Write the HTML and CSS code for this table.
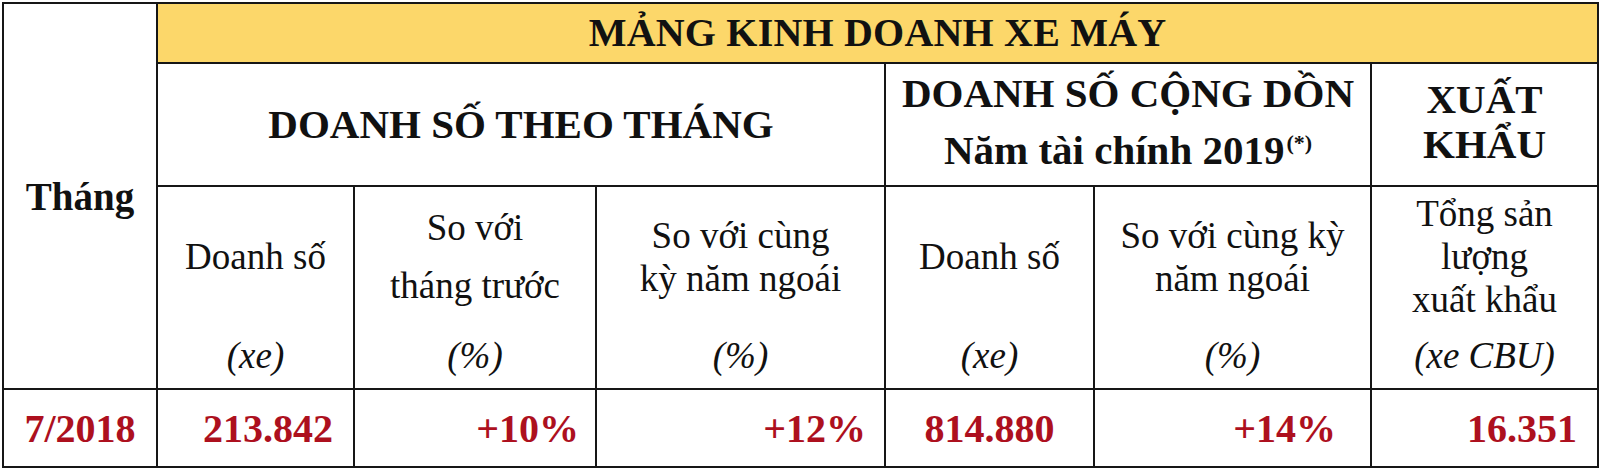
FILE: index.html
```html
<!DOCTYPE html>
<html lang="vi">
<head>
<meta charset="utf-8">
<title>Mảng kinh doanh xe máy</title>
<link rel="stylesheet" href="styles.css">
</head>
<body>
<table class="sheet">
  <colgroup>
    <col class="c-month">
    <col class="c-1">
    <col class="c-2">
    <col class="c-3">
    <col class="c-4">
    <col class="c-5">
    <col class="c-6">
  </colgroup>
  <tr class="r-title">
    <td class="month-head" rowspan="3">Tháng</td>
    <th class="title" colspan="6">MẢNG KINH DOANH XE MÁY</th>
  </tr>
  <tr class="r-group">
    <th class="group" colspan="3">DOANH SỐ THEO THÁNG</th>
    <th class="group tall" colspan="2">DOANH SỐ CỘNG DỒN<br>Năm tài chính 2019<sup class="note">(*)</sup></th>
    <th class="group tight">XUẤT<br>KHẨU</th>
  </tr>
  <tr class="r-sub">
    <td><div class="sub"><div class="main">Doanh số</div><div class="unit">(xe)</div></div></td>
    <td><div class="sub"><div class="main loose">So với<br>tháng trước</div><div class="unit">(%)</div></div></td>
    <td><div class="sub"><div class="main">So với cùng<br>kỳ năm ngoái</div><div class="unit">(%)</div></div></td>
    <td><div class="sub"><div class="main">Doanh số</div><div class="unit">(xe)</div></div></td>
    <td><div class="sub"><div class="main">So với cùng kỳ<br>năm ngoái</div><div class="unit">(%)</div></div></td>
    <td><div class="sub"><div class="main">Tổng sản<br>lượng<br>xuất khẩu</div><div class="unit">(xe CBU)</div></div></td>
  </tr>
  <tr class="r-data">
    <td class="val center">7/2018</td>
    <td class="val pad-20">213.842</td>
    <td class="val pad-16">+10%</td>
    <td class="val pad-18">+12%</td>
    <td class="val center">814.880</td>
    <td class="val pad-34">+14%</td>
    <td class="val pad-20">16.351</td>
  </tr>
</table>
</body>
</html>
```

FILE: styles.css
```css
html, body {
  margin: 0;
  padding: 0;
  background: #ffffff;
}

body {
  padding: 2px 0 0 2px;
  font-family: "Liberation Serif", "Times New Roman", serif;
  color: #111111;
}

.sheet {
  border-collapse: collapse;
  table-layout: fixed;
  width: 1595px;
}

.c-month { width: 154px; }
.c-1 { width: 197px; }
.c-2 { width: 242px; }
.c-3 { width: 289px; }
.c-4 { width: 209px; }
.c-5 { width: 277px; }
.c-6 { width: 227px; }

.sheet td,
.sheet th {
  border: 2px solid #161616;
  padding: 0;
  text-align: center;
  vertical-align: middle;
}

.r-title { height: 60px; }
.r-group { height: 123px; }
.r-sub { height: 203px; }
.r-data { height: 78px; }

.month-head {
  font-weight: bold;
  font-size: 39px;
  background: #ffffff;
  padding-bottom: 14px;
}

.title {
  background: #fcd76a;
  font-weight: bold;
  font-size: 40px;
  line-height: 40px;
  letter-spacing: 0.2px;
}

.group {
  font-weight: bold;
  font-size: 41px;
  line-height: 53px;
  background: #ffffff;
}

.group.tall {
  line-height: 57px;
  padding-bottom: 6px;
}

.group.tight {
  line-height: 45px;
  padding-bottom: 6px;
}

.note {
  font-size: 22px;
  vertical-align: 14px;
  line-height: 0;
  margin-left: 2px;
}

.sub {
  display: flex;
  flex-direction: column;
  height: 201px;
}

.main {
  flex: 1;
  display: flex;
  flex-direction: column;
  justify-content: center;
  font-size: 37px;
  line-height: 43px;
  padding-top: 0;
}

.main.loose {
  line-height: 58px;
}

.unit {
  height: 62px;
  line-height: 60px;
  font-size: 37px;
  font-style: italic;
}

.val {
  font-weight: bold;
  font-size: 40px;
  color: #ad101e;
}

.sheet td.center { text-align: center; }
.sheet td.pad-16 { text-align: right; padding-right: 16px; }
.sheet td.pad-18 { text-align: right; padding-right: 18px; }
.sheet td.pad-20 { text-align: right; padding-right: 20px; }
.sheet td.pad-34 { text-align: right; padding-right: 34px; }
```
